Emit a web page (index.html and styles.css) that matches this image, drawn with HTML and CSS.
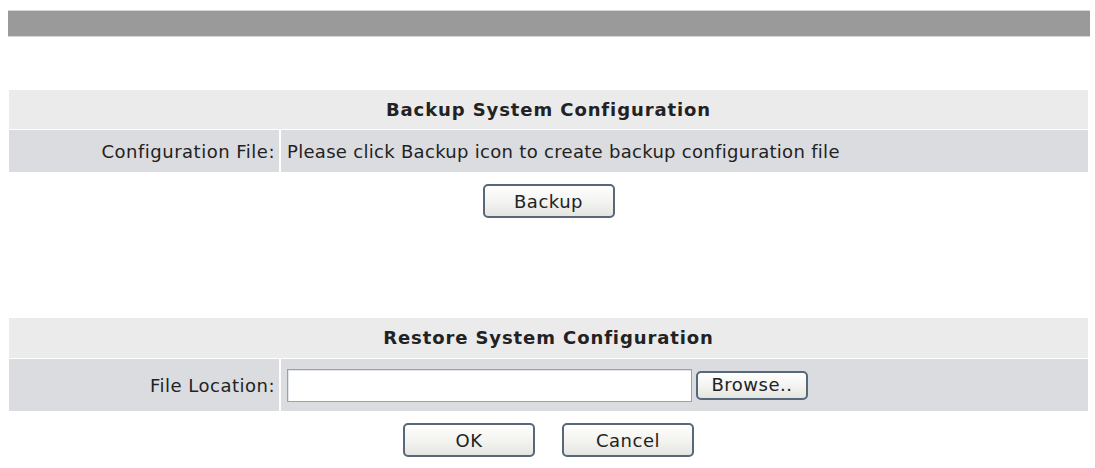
FILE: index.html
```html
<!DOCTYPE html>
<html lang="en">

<head>
    <meta charset="UTF-8">
    <meta name="viewport" content="width=device-width, initial-scale=1.0">
    <title>Backup / Restore</title>

    <link rel="stylesheet" href="styles.css">
</head>

<body>

    <div class="page">
        <!-- 頂部灰條 -->
        <div class="topbar"></div>

        <!-- 備份設定 -->
        <div class="section backup">
            <div class="sec-title">Backup System Configuration</div>
            <div class="sec-row">
                <div class="sec-label">Configuration File:</div>
                <div class="sec-value">Please click Backup icon to create backup configuration file</div>
            </div>
            <div class="actions">
                <button class="btn">Backup</button>
            </div>
        </div>

        <!-- 還原設定 -->
        <div class="section restore">
            <div class="sec-title">Restore System Configuration</div>
            <div class="sec-row">
                <div class="sec-label">File Location:</div>
                <div class="sec-value">
                    <input class="file-input" type="text">
                    <button class="btn btn-browse">Browse..</button>
                </div>
            </div>
            <div class="actions">
                <button class="btn">OK</button>
                <button class="btn">Cancel</button>
            </div>
        </div>
    </div>

</body>

</html>
```

FILE: styles.css
```css
* {
    margin: 0;
    padding: 0;
    box-sizing: border-box;
}

body {
    background-color: #fff;
    font-family: "DejaVu Sans", "Liberation Sans", sans-serif;
    font-size: 18px;
    color: #222;
}

.page {
    padding: 10px 5px 0 8px;
}

/* 頂部灰條 */
.topbar {
    height: 27px;
    background-color: #9a9a9a;
    border-top: 1px solid #d6d6d6;
    border-bottom: 1px solid #d6d6d6;
}

.section {
    margin: 0 2px 0 1px;
}

.backup {
    margin-top: 53px;
}

.restore {
    margin-top: 100px;
}

/* 標題列 */
.sec-title {
    height: 39px;
    line-height: 39px;
    text-align: center;
    font-weight: bold;
    letter-spacing: 0.9px;
    background-color: #ebebec;
}

/* 內容列 */
.sec-row {
    display: grid;
    grid-template-columns: 270px 1fr;
    gap: 2px;
    margin-top: 1px;
    background-color: #fff;
}

.sec-label,
.sec-value {
    display: flex;
    align-items: center;
    background-color: #dbdce0;
}

.sec-label {
    justify-content: flex-end;
    padding-right: 4px;
    letter-spacing: 0.5px;
}

.sec-value {
    padding-left: 6px;
    letter-spacing: 0.3px;
}

.backup .sec-row {
    height: 42px;
}

.restore .sec-title {
    height: 40px;
    line-height: 40px;
}

.restore .sec-row {
    height: 52px;
}

/* 按鈕區 */
.actions {
    display: flex;
    justify-content: center;
    gap: 27px;
    margin-top: 12px;
}

.btn {
    width: 132px;
    height: 34px;
    font-family: inherit;
    font-size: 18px;
    letter-spacing: 0.5px;
    color: #222;
    background: linear-gradient(#ffffff, #f1f1ee 60%, #e4e4e0);
    border: 2px solid #56687a;
    border-radius: 5px;
}

.file-input {
    width: 405px;
    height: 33px;
    border: 1px solid #98a2ad;
    background-color: #fff;
    box-shadow: inset 1px 1px 1px #dfe3e8;
}

.btn-browse {
    width: 112px;
    height: 29px;
    margin-left: 4px;
    padding-bottom: 2px;
}
```
